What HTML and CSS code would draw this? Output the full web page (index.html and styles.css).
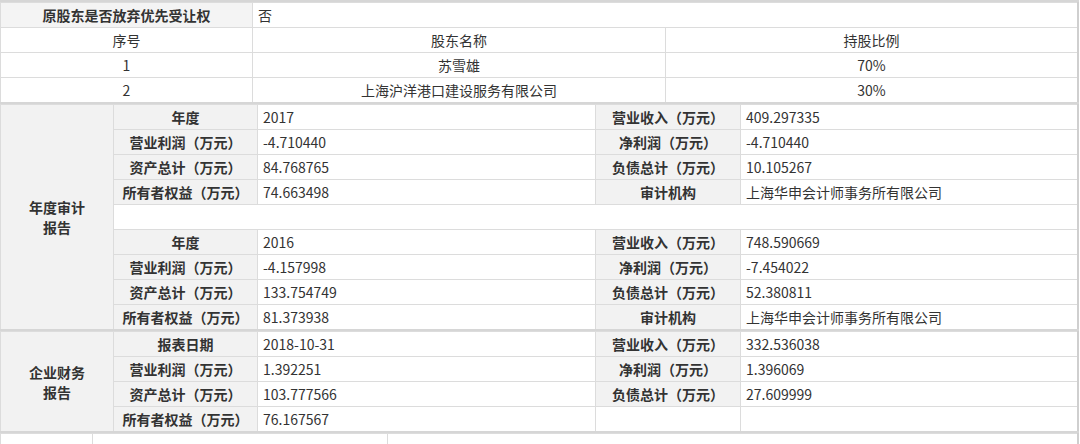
FILE: index.html
```html
<!DOCTYPE html>
<html lang="zh">
<head>
<meta charset="utf-8">
<link rel="stylesheet" href="styles.css">
</head>
<body>
<div class="sheet">
  <table class="tbl t1">
    <colgroup><col class="c1a"><col class="c1b"><col></colgroup>
    <tr><td class="lab">原股东是否放弃优先受让权</td><td class="val" colspan="2">否</td></tr>
    <tr><td class="ctr">序号</td><td class="ctr">股东名称</td><td class="ctr">持股比例</td></tr>
    <tr><td class="ctr">1</td><td class="ctr">苏雪雄</td><td class="ctr">70%</td></tr>
    <tr><td class="ctr">2</td><td class="ctr">上海沪洋港口建设服务有限公司</td><td class="ctr">30%</td></tr>
  </table>
  <table class="tbl t2">
    <colgroup><col class="c2a"><col class="c2b"><col class="c2c"><col class="c2d"><col></colgroup>
    <tr><td class="sec" rowspan="9">年度审计<br>报告</td><td class="lab">年度</td><td class="val">2017</td><td class="lab">营业收入（万元）</td><td class="val">409.297335</td></tr>
    <tr><td class="lab">营业利润（万元）</td><td class="val">-4.710440</td><td class="lab">净利润（万元）</td><td class="val">-4.710440</td></tr>
    <tr><td class="lab">资产总计（万元）</td><td class="val">84.768765</td><td class="lab">负债总计（万元）</td><td class="val">10.105267</td></tr>
    <tr><td class="lab">所有者权益（万元）</td><td class="val">74.663498</td><td class="lab">审计机构</td><td class="val">上海华申会计师事务所有限公司</td></tr>
    <tr><td class="blank" colspan="4"></td></tr>
    <tr><td class="lab">年度</td><td class="val">2016</td><td class="lab">营业收入（万元）</td><td class="val">748.590669</td></tr>
    <tr><td class="lab">营业利润（万元）</td><td class="val">-4.157998</td><td class="lab">净利润（万元）</td><td class="val">-7.454022</td></tr>
    <tr><td class="lab">资产总计（万元）</td><td class="val">133.754749</td><td class="lab">负债总计（万元）</td><td class="val">52.380811</td></tr>
    <tr><td class="lab">所有者权益（万元）</td><td class="val">81.373938</td><td class="lab">审计机构</td><td class="val">上海华申会计师事务所有限公司</td></tr>
  </table>
  <table class="tbl t3">
    <colgroup><col class="c2a"><col class="c2b"><col class="c2c"><col class="c2d"><col></colgroup>
    <tr><td class="sec" rowspan="4">企业财务<br>报告</td><td class="lab">报表日期</td><td class="val">2018-10-31</td><td class="lab">营业收入（万元）</td><td class="val">332.536038</td></tr>
    <tr><td class="lab">营业利润（万元）</td><td class="val">1.392251</td><td class="lab">净利润（万元）</td><td class="val">1.396069</td></tr>
    <tr><td class="lab">资产总计（万元）</td><td class="val">103.777566</td><td class="lab">负债总计（万元）</td><td class="val">27.609999</td></tr>
    <tr><td class="lab">所有者权益（万元）</td><td class="val">76.167567</td><td class="val"></td><td class="val"></td></tr>
  </table>
  <table class="tbl t4">
    <colgroup><col class="c4a"><col class="c4b"><col></colgroup>
    <tr><td class="val"></td><td class="val"></td><td class="val"></td></tr>
  </table>
</div>
</body>
</html>
```

FILE: styles.css
```css
html, body {
  margin: 0;
  padding: 0;
  background: #ffffff;
}
body {
  font-family: "Noto Sans CJK SC", "Microsoft YaHei", sans-serif;
  font-size: 14px;
  color: #333333;
  overflow: hidden;
}
.sheet {
  width: 1079px;
  border-top: 2px solid #d6d6d6;
}
.tbl {
  width: 1079px;
  border-collapse: collapse;
  table-layout: fixed;
  border-right: 2px solid #cfcfcf;
  border-bottom: 2px solid #d6d6d6;
}
.tbl td {
  height: 24px;
  padding: 0 5px;
  border: 1px solid #dcdcdc;
  line-height: 20px;
  white-space: nowrap;
  overflow: hidden;
  vertical-align: middle;
}
.c1a { width: 252px; }
.c1b { width: 413px; }
.c2a { width: 113px; }
.c2b { width: 144px; }
.c2c { width: 338px; }
.c2d { width: 145px; }
.c4a { width: 92px; }
.c4b { width: 295px; }
.lab {
  background: #f2f2f2;
  font-weight: 700;
  text-align: center;
}
.sec {
  background: #f2f2f2;
  font-weight: 700;
  text-align: center;
  line-height: 19px;
}
.val {
  text-align: left;
}
.ctr {
  text-align: center;
}
.t1 .lab {
  background: #f4f4f4;
}
.blank {
  height: 23px;
}
.t4 td {
  height: 20px;
}
```
